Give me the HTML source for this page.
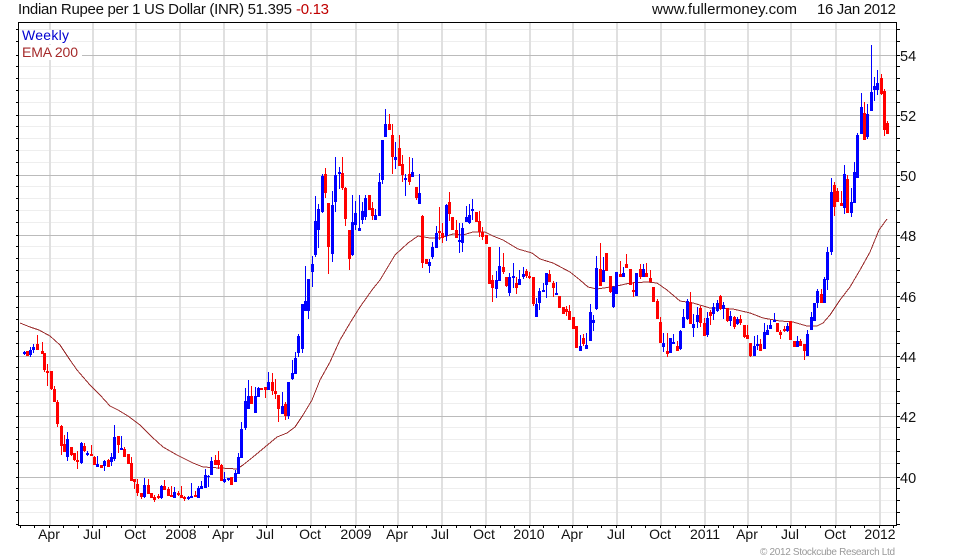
<!DOCTYPE html>
<html><head><meta charset="utf-8"><title>Indian Rupee per 1 US Dollar</title>
<style>
html,body{margin:0;padding:0;background:#fff}
svg{display:block}
text{font-family:"Liberation Sans",Arial,sans-serif;fill:#111}
.g path{fill:none}
</style></head><body>
<svg width="980" height="560" viewBox="0 0 980 560" xmlns="http://www.w3.org/2000/svg">
<rect width="980" height="560" fill="#fff"/>
<g shape-rendering="crispEdges" fill="none">
<path stroke="#eee" d="M19 29.5H896M19 41.5H896M19 66.5H896M19 78.5H896M19 90.5H896M19 102.5H896M19 126.5H896M19 138.5H896M19 150.5H896M19 162.5H896M19 186.5H896M19 198.5H896M19 210.5H896M19 222.5H896M19 246.5H896M19 258.5H896M19 270.5H896M19 282.5H896M19 307.5H896M19 319.5H896M19 331.5H896M19 343.5H896M19 367.5H896M19 379.5H896M19 391.5H896M19 403.5H896M19 427.5H896M19 439.5H896M19 451.5H896M19 463.5H896M19 488.5H896M19 500.5H896M19 512.5H896"/>
<path stroke="#e0e0e0" stroke-width="2" d="M50 23V525M93 23V525M136 23V525M180 23V525M224 23V525M267 23V525M311 23V525M356 23V525M398 23V525M442 23V525M486 23V525M530 23V525M573 23V525M617 23V525M661 23V525M705 23V525M748 23V525M791 23V525M836 23V525M880 23V525"/>
<path stroke="#bbb" d="M19 55.5H896M19 115.5H896M19 175.5H896M19 235.5H896M19 296.5H896M19 356.5H896M19 416.5H896M19 477.5H896"/>
<rect x="19" y="30" width="53" height="14" fill="#fff"/>
<rect x="19" y="45" width="63" height="15" fill="#fff"/>
<path stroke="#000" d="M18.5 22.5H896.5V525.5H18.5ZM16 29.5h2M16 41.5h2M16 55.5h2M16 66.5h2M16 78.5h2M16 90.5h2M16 102.5h2M16 115.5h2M16 126.5h2M16 138.5h2M16 150.5h2M16 162.5h2M16 175.5h2M16 186.5h2M16 198.5h2M16 210.5h2M16 222.5h2M16 235.5h2M16 246.5h2M16 258.5h2M16 270.5h2M16 282.5h2M16 296.5h2M16 307.5h2M16 319.5h2M16 331.5h2M16 343.5h2M16 356.5h2M16 367.5h2M16 379.5h2M16 391.5h2M16 403.5h2M16 416.5h2M16 427.5h2M16 439.5h2M16 451.5h2M16 463.5h2M16 477.5h2M16 488.5h2M16 500.5h2M16 512.5h2M16 524.5h2M897 29.5h3M897 41.5h3M897 55.5h3M897 66.5h3M897 78.5h3M897 90.5h3M897 102.5h3M897 115.5h3M897 126.5h3M897 138.5h3M897 150.5h3M897 162.5h3M897 175.5h3M897 186.5h3M897 198.5h3M897 210.5h3M897 222.5h3M897 235.5h3M897 246.5h3M897 258.5h3M897 270.5h3M897 282.5h3M897 296.5h3M897 307.5h3M897 319.5h3M897 331.5h3M897 343.5h3M897 356.5h3M897 367.5h3M897 379.5h3M897 391.5h3M897 403.5h3M897 416.5h3M897 427.5h3M897 439.5h3M897 451.5h3M897 463.5h3M897 477.5h3M897 488.5h3M897 500.5h3M897 512.5h3M897 524.5h3"/>
<path stroke="#000" d="M20.5 526v2M34.5 526v2M49.5 526v2M63.5 526v2M78.5 526v2M92.5 526v2M106.5 526v2M121.5 526v2M135.5 526v2M150.5 526v2M165.5 526v2M179.5 526v2M194.5 526v2M208.5 526v2M223.5 526v2M237.5 526v2M252.5 526v2M266.5 526v2M281.5 526v2M296.5 526v2M310.5 526v2M325.5 526v2M340.5 526v2M355.5 526v2M369.5 526v2M383.5 526v2M397.5 526v2M412.5 526v2M426.5 526v2M441.5 526v2M456.5 526v2M470.5 526v2M485.5 526v2M500.5 526v2M514.5 526v2M529.5 526v2M543.5 526v2M558.5 526v2M572.5 526v2M587.5 526v2M601.5 526v2M616.5 526v2M631.5 526v2M645.5 526v2M660.5 526v2M675.5 526v2M689.5 526v2M704.5 526v2M718.5 526v2M733.5 526v2M747.5 526v2M761.5 526v2M776.5 526v2M790.5 526v2M805.5 526v2M820.5 526v2M835.5 526v2M850.5 526v2M864.5 526v2M879.5 526v2M893.5 526v2"/>

<!-- EMA -->
<path stroke="#9a2c2c" d="M20 323L30 327L39 330L50 336L60 345L70 360L77 370L90 385L100 395L110 406L118 410L128 416L140 425L152 437L163 447L177 455L193 463L203 467L220 468L237 469L243 465L253 457L265 447L277 437L287 433L295 427L303 415L312 400L320 380L330 362L340 340L350 323L360 307L372 290L380 280L395 255L408 243L418 236L430 238L440 238L453 234L463 235L473 232L485 232L493 236L503 240L518 249L532 253L540 259L553 263L570 272L580 280L588 287L597 289L617 286L630 283L647 282L657 283L667 290L680 301L693 303L710 308L733 309L750 313L763 318L780 321L793 322L807 326L817 326L823 323L830 315L840 300L850 287L860 270L870 252L879 230L887 219"/>

<!-- blue wicks -->
<path stroke="#00f" d="M24.5 351V355M30.5 347V357M33.5 344V353M67.5 432V461M81.5 442V464M87.5 451V456M97.5 456V467M104.5 460V471M111.5 453V466M114.5 425V461M121.5 436V450M144.5 478V498M161.5 485V499M174.5 487V498M188.5 496V500M191.5 483V498M198.5 486V498M201.5 481V489M205.5 469V488M208.5 475V487M211.5 457V475M224.5 472V483M228.5 478V481M235.5 470V482M238.5 453V474M241.5 422V458M245.5 388V430M248.5 380V409M255.5 387V413M258.5 387V397M268.5 372V390M282.5 392V414M288.5 382V419M292.5 360V380M295.5 352V374M298.5 334V357M302.5 304V353M305.5 266V311M308.5 279V319M312.5 256V287M315.5 196V257M318.5 204V248M322.5 174V213M332.5 191V262M335.5 157V212M339.5 167V189M352.5 195V256M355.5 201V230M359.5 195V231M362.5 202V224M365.5 195V220M375.5 209V220M379.5 173V216M382.5 140V184M385.5 109V137M395.5 142V169M405.5 174V196M412.5 158V177M419.5 174V204M429.5 259V273M432.5 242V259M436.5 226V248M446.5 204V241M459.5 223V253M462.5 223V252M466.5 206V222M469.5 204V224M472.5 199V220M496.5 271V298M499.5 247V281M509.5 273V296M513.5 263V288M519.5 270V285M523.5 267V279M536.5 298V317M539.5 288V310M543.5 283V292M546.5 273V298M556.5 282V295M580.5 335V351M586.5 333V349M590.5 304V341M593.5 315V331M596.5 256V310M603.5 257V282M613.5 286V308M616.5 272V294M623.5 267V277M636.5 273V296M643.5 264V277M663.5 333V352M670.5 338V353M673.5 334V344M680.5 330V350M683.5 309V328M687.5 299V320M693.5 314V337M697.5 307V328M707.5 312V337M713.5 303V320M717.5 300V312M723.5 302V319M730.5 311V326M737.5 317V325M754.5 336V356M757.5 335V350M764.5 323V349M767.5 325V335M770.5 320V329M774.5 313V322M787.5 323V332M797.5 336V347M807.5 330V356M811.5 312V330M814.5 303V321M817.5 289V308M824.5 277V303M827.5 247V290M831.5 178V255M844.5 165V214M851.5 188V217M854.5 162V203M857.5 133V178M861.5 93V134M867.5 104V139M871.5 45V111M874.5 77V101M877.5 70V95"/>
<!-- blue bodies -->
<path stroke="#00f" stroke-width="3" d="M24.5 352V354M30.5 350V355M33.5 347V350M67.5 439V457M81.5 443V463M87.5 453V455M97.5 464V467M104.5 461V466M111.5 457V462M114.5 437V459M121.5 448V450M144.5 485V497M161.5 486V498M174.5 492V498M188.5 497V499M191.5 496V498M198.5 488V498M201.5 486V489M205.5 475V488M208.5 476V477M211.5 461V475M224.5 479V482M228.5 478V480M235.5 473V482M238.5 457V474M241.5 429V458M245.5 401V428M248.5 396V409M255.5 396V413M258.5 388V397M268.5 382V390M282.5 406V414M288.5 382V416M292.5 373V379M295.5 358V374M298.5 336V353M302.5 304V349M305.5 301V311M308.5 279V311M312.5 264V272M315.5 221V255M318.5 209V230M322.5 176V212M332.5 205V254M335.5 175V202M339.5 172V174M352.5 222V255M355.5 213V225M359.5 228V231M362.5 211V220M365.5 198V217M375.5 215V220M379.5 182V216M382.5 140V180M385.5 124V137M395.5 157V160M405.5 178V180M412.5 172V177M419.5 193V204M429.5 262V266M432.5 247V257M436.5 233V248M446.5 205V236M459.5 240V242M462.5 228V243M466.5 217V222M469.5 215V223M472.5 209V211M496.5 280V289M499.5 266V281M509.5 277V293M513.5 276V278M519.5 279V285M523.5 274V277M536.5 304V317M539.5 291V303M543.5 290V292M546.5 273V285M556.5 293V295M580.5 346V351M586.5 345V349M590.5 312V341M593.5 320V323M596.5 268V309M603.5 270V282M613.5 287V307M616.5 272V294M623.5 273V277M636.5 273V296M643.5 269V277M663.5 343V347M670.5 338V353M673.5 342V344M680.5 331V349M683.5 317V328M687.5 301V319M693.5 324V328M697.5 315V322M707.5 318V335M713.5 307V314M717.5 303V311M723.5 305V309M730.5 316V321M737.5 319V324M754.5 346V356M757.5 344V346M764.5 332V349M767.5 330V335M770.5 325V329M774.5 320V322M787.5 326V331M797.5 341V347M807.5 334V356M811.5 317V330M814.5 303V321M817.5 291V303M824.5 279V303M827.5 252V280M831.5 192V252M844.5 174V208M851.5 202V213M854.5 172V203M857.5 135V178M861.5 107V134M867.5 114V137M871.5 92V111M874.5 86V90M877.5 83V90"/>
<!-- red wicks -->
<path stroke="#f00" d="M27.5 351V356M37.5 335V350M42.5 342V354M44.5 353V372M47.5 364V386M51.5 371V390M54.5 386V402M57.5 400V427M61.5 425V455M64.5 435V452M71.5 447V456M74.5 453V461M77.5 451V469M84.5 443V452M91.5 445V456M94.5 456V465M101.5 465V468M108.5 459V467M118.5 436V453M124.5 447V457M128.5 454V464M131.5 457V481M134.5 479V489M137.5 479V496M141.5 493V499M148.5 479V494M151.5 493V498M154.5 495V502M158.5 494V499M164.5 480V490M168.5 487V496M171.5 486V497M178.5 491V496M181.5 486V498M184.5 496V501M195.5 491V497M215.5 455V465M218.5 451V469M221.5 464V481M231.5 477V485M251.5 386V404M261.5 388V390M265.5 387V398M272.5 373V395M275.5 379V399M278.5 395V422M285.5 402V420M325.5 168V198M328.5 203V274M342.5 157V190M345.5 187V226M349.5 230V270M369.5 195V210M372.5 202V220M389.5 114V130M392.5 124V174M399.5 135V166M402.5 155V182M409.5 157V185M416.5 187V200M422.5 215V268M426.5 259V264M439.5 207V240M442.5 223V243M449.5 192V221M452.5 217V230M456.5 220V238M476.5 212V222M479.5 211V237M482.5 227V240M486.5 235V244M489.5 247V284M492.5 275V302M503.5 253V274M506.5 277V287M516.5 277V294M526.5 269V278M529.5 272V279M533.5 277V306M549.5 270V282M553.5 281V297M559.5 296V308M563.5 307V314M566.5 306V316M569.5 305V320M573.5 317V329M576.5 326V348M583.5 334V346M600.5 243V286M606.5 253V271M610.5 276V293M620.5 261V277M626.5 254V268M630.5 269V285M633.5 282V297M640.5 264V279M646.5 263V277M650.5 270V282M653.5 287V302M657.5 299V319M660.5 317V343M667.5 333V357M677.5 341V351M690.5 292V324M700.5 306V327M704.5 318V336M710.5 310V325M720.5 295V310M727.5 308V322M734.5 316V329M740.5 315V325M744.5 325V338M747.5 325V339M750.5 343V357M760.5 339V351M777.5 323V332M780.5 330V339M784.5 326V332M790.5 321V340M794.5 341V347M800.5 339V346M804.5 344V360M821.5 289V303M834.5 182V216M837.5 188V202M841.5 191V206M847.5 175V213M864.5 102V140M881.5 74V95M884.5 89V136M887.5 121V134"/>
<!-- red bodies -->
<path stroke="#f00" stroke-width="3" d="M27.5 351V356M37.5 344V350M42.5 351V354M44.5 353V370M47.5 371V373M51.5 371V389M54.5 389V402M57.5 402V424M61.5 426V446M64.5 444V452M71.5 447V455M74.5 453V460M77.5 460V462M84.5 446V451M91.5 454V456M94.5 457V465M101.5 465V468M108.5 460V467M118.5 436V445M124.5 449V457M128.5 454V464M131.5 463V481M134.5 479V482M137.5 484V493M141.5 493V497M148.5 485V494M151.5 493V498M154.5 497V500M158.5 496V498M164.5 486V490M168.5 489V496M171.5 495V497M178.5 493V495M181.5 495V498M184.5 497V499M195.5 495V497M215.5 460V465M218.5 460V465M221.5 465V481M231.5 477V485M251.5 396V404M261.5 388V390M265.5 387V390M272.5 382V391M275.5 391V394M278.5 395V409M285.5 404V416M325.5 174V193M328.5 203V247M342.5 173V188M345.5 188V219M349.5 230V259M369.5 195V210M372.5 208V216M389.5 124V130M392.5 135V157M399.5 148V166M402.5 164V175M409.5 174V182M416.5 187V198M422.5 216V263M426.5 259V264M439.5 231V233M442.5 233V238M449.5 202V214M452.5 217V230M456.5 230V238M476.5 212V222M479.5 221V232M482.5 232V237M486.5 235V244M489.5 247V284M492.5 280V288M503.5 267V272M506.5 277V286M516.5 283V288M526.5 271V276M529.5 276V278M533.5 277V304M549.5 274V282M553.5 283V288M559.5 296V308M563.5 307V314M566.5 309V312M569.5 311V320M573.5 317V329M576.5 326V348M583.5 338V344M600.5 269V286M606.5 253V271M610.5 276V292M620.5 274V277M626.5 264V268M630.5 269V285M633.5 290V292M640.5 269V277M646.5 273V277M650.5 278V282M653.5 287V302M657.5 301V319M660.5 322V343M667.5 351V354M677.5 346V351M690.5 302V324M700.5 308V323M704.5 323V336M710.5 312V316M720.5 296V309M727.5 308V321M734.5 317V327M740.5 319V323M744.5 325V337M747.5 335V339M750.5 343V356M760.5 344V351M777.5 323V332M780.5 332V335M784.5 329V331M790.5 321V340M794.5 341V347M800.5 341V346M804.5 344V351M821.5 294V303M834.5 185V207M837.5 191V202M841.5 203V206M847.5 179V213M864.5 113V140M881.5 78V94M884.5 91V130M887.5 123V134"/>
</g>

<text x="18" y="14" font-size="15" textLength="274" lengthAdjust="spacing">Indian Rupee per 1 US Dollar (INR) 51.395</text>
<text x="296" y="14" font-size="15" textLength="33" lengthAdjust="spacing" style="fill:#c00000">-0.13</text>
<text x="652" y="14" font-size="15" textLength="145" lengthAdjust="spacing">www.fullermoney.com</text>
<text x="817" y="14" font-size="15" textLength="79" lengthAdjust="spacing">16 Jan 2012</text>
<text x="22" y="40" font-size="14" textLength="47" lengthAdjust="spacing" style="fill:#0000d0">Weekly</text>
<text x="22" y="57" font-size="14" textLength="56" lengthAdjust="spacing" style="fill:#a52a2a">EMA 200</text>
<g font-size="14.5">
<text x="900" y="61">54</text><text x="900" y="121">52</text><text x="900" y="181">50</text><text x="900" y="241">48</text><text x="900" y="302">46</text><text x="900" y="362">44</text><text x="900" y="422">42</text><text x="900" y="483">40</text>
</g>
<g font-size="14" text-anchor="middle">
<text x="49" y="539">Apr</text><text x="92" y="539">Jul</text><text x="135" y="539">Oct</text><text x="181" y="539">2008</text><text x="223" y="539">Apr</text><text x="265" y="539">Jul</text><text x="310" y="539">Oct</text><text x="356" y="539">2009</text><text x="397" y="539">Apr</text><text x="440" y="539">Jul</text><text x="484" y="539">Oct</text><text x="529" y="539">2010</text><text x="572" y="539">Apr</text><text x="616" y="539">Jul</text><text x="660" y="539">Oct</text><text x="705" y="539">2011</text><text x="747" y="539">Apr</text><text x="790" y="539">Jul</text><text x="835" y="539">Oct</text><text x="880" y="539">2012</text>
</g>
<text x="760" y="555" font-size="10" textLength="135" lengthAdjust="spacing" style="fill:#999">© 2012 Stockcube Research Ltd</text>
</svg>
</body></html>
